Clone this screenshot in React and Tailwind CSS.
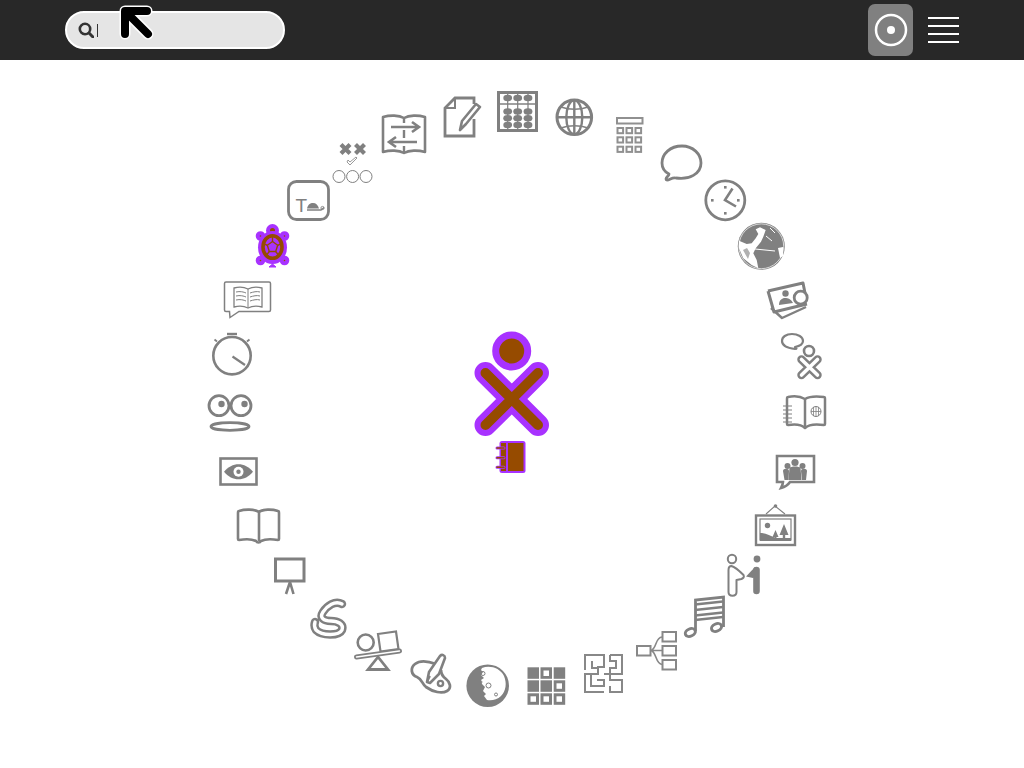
const PURPLE = "#a832ff";
const BROWN = "#964b00";
const GREY = "#808080";

function Ic({ box, className, children }) {
  return (
    <svg
      viewBox={box}
      className={`absolute fill-none stroke-[#808080] ${className}`}
    >
      {children}
    </svg>
  );
}

function Toolbar() {
  return (
    <div className="flex h-[60px] items-center justify-between bg-[#282828] pl-[65px] pr-[65px]">
      <div className="flex h-[38px] w-[220px] items-center rounded-[19px] border-2 border-white bg-[#e5e5e5] pl-[11px]">
        <svg viewBox="0 0 16 16" className="h-4 w-4 fill-none stroke-[#333333]">
          <circle cx="7" cy="7" r="5.2" strokeWidth="2.6" />
          <path d="M11 11l4 4" strokeWidth="3" strokeLinecap="round" />
        </svg>
        <div className="ml-[3px] h-[13px] w-px bg-[#333333]" />
      </div>
      <div className="flex items-center gap-[15px]">
        <button className="flex h-[52px] w-[45px] items-center justify-center rounded-[7px] bg-[#808080]">
          <svg viewBox="0 0 34 34" className="h-[34px] w-[34px] fill-none stroke-white">
            <circle cx="17" cy="17" r="15" strokeWidth="2.5" />
            <circle cx="17" cy="17" r="4" className="fill-white stroke-none" />
          </svg>
        </button>
        <div className="flex w-[31px] flex-col gap-[5.5px]">
          <div className="h-[2.5px] bg-white" />
          <div className="h-[2.5px] bg-white" />
          <div className="h-[2.5px] bg-white" />
          <div className="h-[2.5px] bg-white" />
        </div>
      </div>
    </div>
  );
}

function Cursor() {
  return (
    <svg viewBox="119 5 35 35" className="absolute left-[119px] top-[5px] h-[35px] w-[35px] fill-none">
      <g stroke="#fff" strokeWidth="11" strokeLinecap="round" strokeLinejoin="round">
        <path d="M125 34V11H147" />
        <path d="M128 14L148 34" />
      </g>
      <g stroke="#000" strokeWidth="8" strokeLinecap="round" strokeLinejoin="round">
        <path d="M125 34V11H147" />
        <path d="M128 14L148 34" />
      </g>
    </svg>
  );
}

function TopIcons() {
  return (
    <>
      {/* tic tac toe */}
      <Ic box="330 138 45 48" className="left-[330px] top-[138px] h-[48px] w-[45px]">
        <path d="M341 144.5l9 9M350 144.5l-9 9M355.5 144.5l9 9M364.5 144.5l-9 9" strokeWidth="4.2" />
        <path d="M347 162l3 3 7-7-1-1-6 5-2-2z" strokeWidth="0.8" />
        <circle cx="339" cy="176.5" r="6" strokeWidth="1" />
        <circle cx="352.6" cy="176.5" r="6" strokeWidth="1" />
        <circle cx="366" cy="176.5" r="6" strokeWidth="1" />
      </Ic>
      {/* translate */}
      <Ic box="380 112 48 46" className="left-[380px] top-[112px] h-[46px] w-[48px]">
        <path d="M404 118c-5-3-14-3-21-1v35c7-2 16-2 21 1 5-3 14-3 21-1v-35c-7-2-16-2-21 1z" strokeWidth="2.6" strokeLinejoin="round" />
        <path d="M391 127h27M412 122l7 5-7 5M417 142h-27M396 137l-7 5 7 5" strokeWidth="2.6" />
        <path d="M404 118v5M404 130v8M404 146v6" strokeWidth="2.4" />
      </Ic>
      {/* write */}
      <Ic box="442 95 42 44" className="left-[442px] top-[95px] h-[44px] w-[42px]">
        <path d="M474 104v-6h-19l-10 10v28h29v-17" strokeWidth="2.8" />
        <path d="M455 98v10h-10" strokeWidth="2" />
        <path d="M460 130l2-9 14-17 4 3-14 17z" strokeWidth="2.6" strokeLinejoin="round" />
      </Ic>
      {/* abacus */}
      <Ic box="495 89 45 45" className="left-[495px] top-[89px] h-[45px] w-[45px]">
        <rect x="498.5" y="92.5" width="38" height="38" strokeWidth="3" />
        <path d="M499 104h37" strokeWidth="1.6" />
        <path d="M507.7 93v37M517.7 93v37M528 93v37" strokeWidth="1.2" />
        <g className="fill-[#808080] stroke-none">
          {[507.7, 517.7, 528].map((x) =>
            [98, 111.5, 118.2, 125].map((y) => (
              <ellipse key={`${x}-${y}`} cx={x} cy={y} rx="4.4" ry="3.2" />
            ))
          )}
        </g>
      </Ic>
      {/* browse */}
      <Ic box="553 96 43 43" className="left-[553px] top-[96px] h-[43px] w-[43px]">
        <circle cx="574.3" cy="117.3" r="17.3" strokeWidth="3" />
        <ellipse cx="574.3" cy="117.3" rx="8" ry="17" strokeWidth="2.4" />
        <path d="M574.3 100v34M557 117.3h34" strokeWidth="2.4" />
        <path d="M561 107c8 3 19 3 27 0M561 128c8-3 19-3 27 0" strokeWidth="1.6" />
      </Ic>
      {/* calculator */}
      <Ic box="614 115 31 40" className="left-[614px] top-[115px] h-[40px] w-[31px] stroke-[#909090]">
        <rect x="617" y="118" width="25.5" height="5.5" strokeWidth="2" />
        {[128, 137.3, 146.7].map((y) =>
          [617.5, 626.5, 635.5].map((x) => (
            <rect key={`${x}-${y}`} x={x} y={y} width="5.6" height="5.2" strokeWidth="2" />
          ))
        )}
      </Ic>
      {/* chat */}
      <Ic box="658 142 47 42" className="left-[658px] top-[142px] h-[42px] w-[47px]">
        <path d="M667 180c3 0 5-3 9-2 13 2 25-4 25-15 0-9-8-17-19-17-12 0-20 8-20 17 0 5 3 9 7 11 0 2-3 3-3 5 0 1 0 1 1 1z" strokeWidth="2.8" strokeLinejoin="round" />
      </Ic>
      {/* clock */}
      <Ic box="702 177 47 47" className="left-[702px] top-[177px] h-[47px] w-[47px]">
        <circle cx="725.3" cy="200.3" r="19.5" strokeWidth="2.8" />
        <path d="M732.5 188.5L725 200l11 6.5" strokeWidth="2.6" />
        <g className="fill-[#808080] stroke-none">
          <rect x="724" y="186" width="2.6" height="2.6" />
          <rect x="724" y="212" width="2.6" height="2.6" />
          <rect x="711" y="199" width="2.6" height="2.6" />
          <rect x="737" y="199" width="2.6" height="2.6" />
        </g>
      </Ic>
      {/* web activity globe */}
      <Ic box="737 222 49 49" className="left-[737px] top-[222px] h-[49px] w-[49px] stroke-none">
        <circle cx="761.3" cy="246.3" r="23.5" fill={GREY} />
        <circle cx="761.3" cy="246.3" r="22.4" fill="none" stroke="#fff" strokeWidth="0.7" />
        <path
          d="M739 240.7L746.7 244 751.7 243.3 755.7 238.3 758.3 234 755.7 229.3 760 227.3 765.7 230 763.3 236.7 761 241.7 755.7 248.3 753.3 253.3 756.7 260 758.3 268.3 751.7 265 743.3 258.3 739 248.3z"
          fill="#fff"
        />
        <path d="M755 249l20 2M766 236l6 5M770 228l5 5" fill="none" stroke="#fff" strokeWidth="1" />
        <path d="M778 248l5-1 0 9-3 2z" fill="#fff" />
        <path d="M743 250l4-2 3 5-2 6z" fill="#b0b0b0" />
      </Ic>
    </>
  );
}

function RightIcons() {
  return (
    <>
      {/* photos */}
      <Ic box="764 278 47 44" className="left-[764px] top-[278px] h-[44px] w-[47px]">
        <path d="M768 291l35-8 2 10M807 304l-33 8-6-21" strokeWidth="3" strokeLinejoin="round" />
        <path d="M771 308l11 10 24-11" strokeWidth="2.4" strokeLinejoin="round" />
        <circle cx="785.5" cy="293.5" r="3.2" fill={GREY} stroke="none" />
        <path d="M779 305c0-5 3-7 6-7s6 1 8 5z" fill={GREY} stroke="none" />
        <circle cx="800.7" cy="297.7" r="6.5" fill="#fff" strokeWidth="2.8" />
      </Ic>
      {/* chat + xo */}
      <Ic box="778 330 46 50" className="left-[778px] top-[330px] h-[50px] w-[46px]">
        <path d="M795 349c2 0 2-1 0-2 5-1 8-3 8-6 0-4-5-7-11-7-6 0-10 3-10 7 0 4 5 7 13 8z" strokeWidth="2.2" strokeLinejoin="round" fill="#fff" />
        <path d="M801.5 359.5l16 15.5M817.5 359.5l-16 15.5" strokeWidth="8.5" strokeLinecap="round" />
        <path d="M801.5 359.5l16 15.5M817.5 359.5l-16 15.5" strokeWidth="3.6" strokeLinecap="round" stroke="#fff" />
        <circle cx="809" cy="351" r="5" strokeWidth="2.6" fill="#fff" />
      </Ic>
      {/* read web */}
      <Ic box="780 392 50 40" className="left-[780px] top-[392px] h-[40px] w-[50px]">
        <path d="M805 399c-5-3-12-3-17-2-1 0-1 1-1 2v25c0 1 0 1 1 1 6-1 13-1 17 3 4-4 12-4 19-3 1 0 1 0 1-1v-25c0-1 0-2-1-2-7-1-14-1-19 2z" strokeWidth="2.5" strokeLinejoin="round" />
        <path d="M805 399v29" strokeWidth="2.5" />
        <path d="M783 406h9M783 410h9M783 414h9M783 418h9M783 422h9" strokeWidth="1.1" />
        <circle cx="816" cy="411.5" r="5" strokeWidth="1" />
        <path d="M816 406.5v10M811 411.5h10M813.5 407v9M818.5 407v9" strokeWidth="0.8" />
      </Ic>
      {/* chat people */}
      <Ic box="773 453 44 39" className="left-[773px] top-[453px] h-[39px] w-[44px]">
        <path d="M777 456h37v26h-24c-2 3-5 5-9 6 1-2 2-4 2-6h-6z" strokeWidth="2.6" strokeLinejoin="miter" />
        <g fill={GREY} stroke="none">
          <circle cx="795" cy="462.5" r="3.6" />
          <circle cx="787.5" cy="466" r="3" />
          <circle cx="802.5" cy="466" r="3" />
          <path d="M789.5 468c1-2 10-2 11 0l1 12h-13z" />
          <path d="M783 471c0-3 6-3 6 0l-.5 9h-4zM801 471c0-3 6-3 6 0l-1 9h-4z" />
        </g>
      </Ic>
      {/* picture frame */}
      <Ic box="753 503 45 45" className="left-[753px] top-[503px] h-[45px] w-[45px]">
        <rect x="756" y="515.5" width="39" height="29.5" strokeWidth="2.4" />
        <rect x="760" y="519" width="31" height="21" strokeWidth="1.2" />
        <path d="M766 514l9-8 10 8" strokeWidth="1.1" />
        <g fill={GREY} stroke="none">
          <circle cx="775.5" cy="506" r="1.8" />
          <circle cx="767.5" cy="525.5" r="2.7" />
          <path d="M760 533c6 0 10 3 16 5h15v3h-31z" />
          <path d="M775.5 530l3 7h-2v2h-2v-2h-2zM784 524l4.5 11h-3.3v4h-2.4v-4h-3.3z" />
        </g>
      </Ic>
      {/* person + i */}
      <Ic box="724 552 40 48" className="left-[724px] top-[552px] h-[48px] w-[40px]">
        <circle cx="732" cy="559" r="4.2" strokeWidth="2" />
        <path d="M731.5 566c4 1 8 5 12 9 1 2 0 3-2 4l-5 1v12c0 5-8 5-8 0v-22c0-2 1-4 3-4z" strokeWidth="2" strokeLinejoin="round" />
        <circle cx="757" cy="559" r="3.4" fill={GREY} stroke="none" />
        <path d="M756.5 570v21" strokeWidth="6.6" strokeLinecap="round" />
        <path d="M755 567l-9 9.5 7 1.5 4-2z" fill={GREY} stroke="none" />
      </Ic>
      {/* music */}
      <Ic box="682 595 44 45" className="left-[682px] top-[595px] h-[45px] w-[44px]">
        <path d="M695.5 631v-31l28-3v30" strokeWidth="2.8" />
        <path d="M695 604.5l28-3M695 610l28-3M695 615.5l28-3M695 620l28-3" strokeWidth="2.4" />
        <ellipse cx="690.3" cy="632.5" rx="5.3" ry="3.6" transform="rotate(-25 690.3 632.5)" strokeWidth="3" />
        <ellipse cx="716.5" cy="627.5" rx="5.3" ry="3.6" transform="rotate(-25 716.5 627.5)" strokeWidth="3" />
      </Ic>
      {/* mind map */}
      <Ic box="634 629 45 43" className="left-[634px] top-[629px] h-[43px] w-[45px] stroke-[#888888]">
        <rect x="637" y="646" width="13.5" height="9.5" strokeWidth="2" />
        <rect x="662.5" y="632" width="13.5" height="9.5" strokeWidth="2" />
        <rect x="662.5" y="646" width="13.5" height="9.5" strokeWidth="2" />
        <rect x="662.5" y="660" width="13.5" height="9.5" strokeWidth="2" />
        <path d="M651 650.5h11M651 650.5c6-2 4-13 11-13.5M651 650.5c6 2 4 13 11 14" strokeWidth="1.6" />
      </Ic>
      {/* maze */}
      <Ic box="582 652 43 43" className="left-[582px] top-[652px] h-[43px] w-[43px] stroke-[#888888]">
        <path d="M585 670V655H604V667H597M592 661V668H598V674H585V692H604M591 674V686H604V680H597M610 655H622V674H610V668H616V661H610V655M604 674H610V680H622V692H610V686" strokeWidth="2" />
      </Ic>
    </>
  );
}

function BottomIcons() {
  return (
    <>
      {/* memorize grid */}
      <Ic box="527 667 39 39" className="left-[527px] top-[667px] h-[39px] w-[39px] stroke-none">
        <g fill={GREY}>
          {[527.5, 540.5, 553.7].map((x) =>
            [667.3, 680.3, 693.3].map((y) => (
              <rect key={`${x}-${y}`} x={x} y={y} width="11.5" height="11.5" />
            ))
          )}
        </g>
        <g fill="#fff">
          <rect x="543.5" y="670.5" width="5.5" height="5.5" />
          <rect x="556.5" y="683.3" width="5.5" height="5.5" />
          <rect x="530.5" y="696.3" width="5.5" height="5.5" />
          <rect x="543.5" y="696.3" width="5.5" height="5.5" />
          <rect x="556.5" y="696.3" width="5.5" height="5.5" />
        </g>
      </Ic>
      {/* moon */}
      <Ic box="465 663 45 45" className="left-[465px] top-[663px] h-[45px] w-[45px] stroke-none">
        <circle cx="487.7" cy="685.7" r="21.3" fill={GREY} />
        <path d="M482 668c8-3 18 0 22 8 3 7 2 15-3 20-4 4-10 5-14 4l-3-4 2-2-3-3 2-4-3-3-1-4 3-2-3-3 2-3-2-2z" fill="#fff" />
        <g fill="none" stroke={GREY} strokeWidth="1">
          <circle cx="483" cy="673.5" r="2" />
          <circle cx="488.5" cy="685.5" r="2.5" />
          <circle cx="496" cy="694.5" r="1.5" />
          <circle cx="481" cy="682" r="1" />
        </g>
      </Ic>
      {/* paint */}
      <Ic box="408 651 45 46" className="left-[408px] top-[651px] h-[46px] w-[45px]">
        <path d="M436 664c-8-3-16-4-21 0-5 4-4 11 2 13 5 2 5 7 9 10 7 5 16 7 21 4 5-3 3-9-1-12-4-3-5-5-5-9" strokeWidth="2.8" fill="#fff" />
        <circle cx="440.5" cy="683.5" r="2.6" strokeWidth="2.4" />
        <path d="M427 682l2-10 11-16c2-2 5-1 5 2l-6 16-9 9z" strokeWidth="2.6" fill="#fff" strokeLinejoin="round" />
        <path d="M427 682l3-6" strokeWidth="2" />
      </Ic>
      {/* physics seesaw */}
      <Ic box="353 628 49 45" className="left-[353px] top-[628px] h-[45px] w-[49px]">
        <circle cx="365.7" cy="642.5" r="8" strokeWidth="2.6" />
        <path d="M378 634l18-2.5 2.5 17.5-18 2.5z" strokeWidth="2.2" />
        <path d="M356.5 657l43-6" strokeWidth="5" strokeLinecap="round" />
        <path d="M356.5 657l43-6" strokeWidth="1.4" strokeLinecap="round" stroke="#fff" />
        <path d="M378 657l-10 12.5h20z" strokeWidth="2.8" />
      </Ic>
      {/* snake */}
      <Ic box="309 596 40 43" className="left-[309px] top-[596px] h-[43px] w-[40px]">
        <path d="M342 604C335 600 327 606 323 612 319 618 324 621 331 621 338 621 344 624 342 630 339 636 322 636 316 630 314 627 314 625 315 622" strokeWidth="8.4" strokeLinecap="round" strokeLinejoin="round" />
        <path d="M342 604C335 600 327 606 323 612 319 618 324 621 331 621 338 621 344 624 342 630 339 636 322 636 316 630 314 627 314 625 315 622" strokeWidth="3.4" strokeLinecap="round" stroke="#fff" />
      </Ic>
    </>
  );
}

function LeftIcons() {
  return (
    <>
      {/* easel */}
      <Ic box="272 555 36 41" className="left-[272px] top-[555px] h-[41px] w-[36px]">
        <rect x="275.5" y="559" width="28.5" height="22" strokeWidth="3" />
        <path d="M290 582l-4 12M290 582l3.5 12" strokeWidth="2.6" />
      </Ic>
      {/* read book */}
      <Ic box="234 505 49 41" className="left-[234px] top-[505px] h-[41px] w-[49px]">
        <path d="M259 512c-5-3-14-3-20-1-1 0-1 1-1 2v26c0 1 0 1 1 1 6-1 13-1 17 1 1 2 4 2 5 0 4-2 11-2 17-1 1 0 1 0 1-1v-26c0-1 0-2-1-2-6-2-15-2-19 1z" strokeWidth="2.6" strokeLinejoin="round" />
        <path d="M259 512v29" strokeWidth="2.6" />
      </Ic>
      {/* eye frame */}
      <Ic box="217 455 43 33" className="left-[217px] top-[455px] h-[33px] w-[43px]">
        <rect x="220.5" y="458.5" width="36" height="26" strokeWidth="2.6" />
        <path d="M224 471.7c8-10 21-10 29 0-8 10-21 10-29 0z" fill={GREY} stroke="none" />
        <circle cx="238.5" cy="471.7" r="5" fill="#fff" stroke="none" />
        <circle cx="238.5" cy="471.7" r="2.2" fill={GREY} stroke="none" />
      </Ic>
      {/* eyes */}
      <Ic box="205 392 49 42" className="left-[205px] top-[392px] h-[42px] w-[49px]">
        <circle cx="219" cy="405.7" r="10" strokeWidth="2.8" />
        <circle cx="241" cy="405.7" r="10" strokeWidth="2.8" />
        <circle cx="221.5" cy="404" r="3.2" fill={GREY} stroke="none" />
        <circle cx="244.5" cy="404" r="3.2" fill={GREY} stroke="none" />
        <ellipse cx="230" cy="426.5" rx="19" ry="3.8" strokeWidth="2.8" />
      </Ic>
      {/* stopwatch */}
      <Ic box="210 331 44 46" className="left-[210px] top-[331px] h-[46px] w-[44px]">
        <circle cx="232" cy="355.7" r="18.7" strokeWidth="2.6" />
        <path d="M227 334h10" strokeWidth="2.4" />
        <path d="M214.5 339.5l2.5 2M249.5 339.5l-2.5 2" strokeWidth="1.8" />
        <path d="M232.5 356.5L245 365" strokeWidth="2.2" />
      </Ic>
      {/* book chat */}
      <Ic box="222 279 51 41" className="left-[222px] top-[279px] h-[41px] w-[51px]">
        <path d="M226 282h43a1.5 1.5 0 0 1 1.5 1.5v26.5a1.5 1.5 0 0 1-1.5 1.5h-30l-9 6-.5-6h-3.5a1.5 1.5 0 0 1-1.5-1.5v-26.5a1.5 1.5 0 0 1 1.5-1.5z" strokeWidth="1.5" />
        <path d="M248 289c-4-2-10-2-14-1v19c4-1 10-1 14 1 4-2 10-2 14-1v-19c-4-1-10-1-14 1z" strokeWidth="1.3" />
        <path d="M248 289v19M236 292c4-1 8 0 10 1M236 296c4-1 8 0 10 1M236 300c4-1 8 0 10 1M250 293c3-1 7-2 10-1M250 297c3-1 7-2 10-1M250 301c3-1 7-2 10-1" strokeWidth="1" />
      </Ic>
      {/* turtle blocks, coloured */}
      <svg viewBox="254 222 37 47" className="absolute left-[254px] top-[222px] h-[47px] w-[37px] fill-none">
        <g fill={BROWN} stroke={PURPLE} strokeWidth="4">
          <circle cx="272.5" cy="230.5" r="4.5" />
          <circle cx="260.5" cy="236" r="2.8" />
          <circle cx="284.5" cy="236" r="2.8" />
          <circle cx="260.5" cy="260.5" r="2.8" />
          <circle cx="284.5" cy="260.5" r="2.8" />
        </g>
        <path d="M272.5 264l3.5 3h-7z" fill={PURPLE} stroke={PURPLE} />
        <ellipse cx="272.5" cy="247.5" rx="14.5" ry="16.5" fill={PURPLE} />
        <ellipse cx="272.5" cy="247" rx="9.5" ry="11.3" fill={PURPLE} stroke={BROWN} strokeWidth="3.6" />
        <path d="M272.5 241.5l5.2 3.8-2 6.2h-6.4l-2-6.2z" fill={PURPLE} stroke={BROWN} strokeWidth="1.4" />
        <path d="M272.5 241.5v-5M277.7 245.3l5-2.5M275.7 251.5l3.5 4.5M269.3 251.5l-3.5 4.5M267.3 245.3l-5-2.5" stroke={BROWN} strokeWidth="1.4" />
      </svg>
      {/* turtle in a box */}
      <Ic box="285 178 46 46" className="left-[285px] top-[178px] h-[46px] w-[46px]">
        <rect x="288.5" y="181.5" width="40" height="38" rx="8" strokeWidth="2.8" />
        <text x="295.5" y="212" fontFamily="Liberation Sans, sans-serif" fontSize="19" fill={GREY} stroke="none">T</text>
        <path d="M307 208.5c1-4 3-5.5 6-5.5s5 2 6 5.5z" fill={GREY} stroke="none" />
        <path d="M307 210h14l3-2.5" strokeWidth="1.4" />
        <circle cx="322.5" cy="208" r="1.6" strokeWidth="0.9" />
      </Ic>
    </>
  );
}

function Center() {
  return (
    <>
      {/* xo buddy */}
      <svg viewBox="470 328 84 112" className="absolute left-[470px] top-[328px] h-[112px] w-[84px] fill-none">
        <circle cx="511.7" cy="351" r="16" fill={BROWN} stroke={PURPLE} strokeWidth="7" />
        <g strokeLinecap="round">
          <g stroke={PURPLE} strokeWidth="22">
            <path d="M485.5 373L538 425M538 373L485.5 425" />
          </g>
          <g stroke={BROWN} strokeWidth="10">
            <path d="M485.5 373L538 425M538 373L485.5 425" />
          </g>
        </g>
      </svg>
      {/* journal */}
      <svg viewBox="494 439 33 36" className="absolute left-[494px] top-[439px] h-[36px] w-[33px] fill-none">
        <rect x="499.5" y="441" width="26" height="32" rx="2.5" fill={PURPLE} />
        <rect x="501" y="443" width="5" height="28" fill={BROWN} />
        <rect x="508" y="443" width="15.5" height="28" fill={BROWN} />
        <g strokeLinecap="round">
          <path d="M497 448h7M497 457.7h7M497 467.3h7" stroke={PURPLE} strokeWidth="3" />
          <path d="M497 448h7M497 457.7h7M497 467.3h7" stroke={BROWN} strokeWidth="1.5" />
        </g>
      </svg>
    </>
  );
}

export default function App() {
  return (
    <div className="relative h-[768px] w-[1024px] overflow-hidden bg-white font-['Liberation_Sans',sans-serif]">
      <Toolbar />
      <TopIcons />
      <RightIcons />
      <BottomIcons />
      <LeftIcons />
      <Center />
      <Cursor />
    </div>
  );
}
